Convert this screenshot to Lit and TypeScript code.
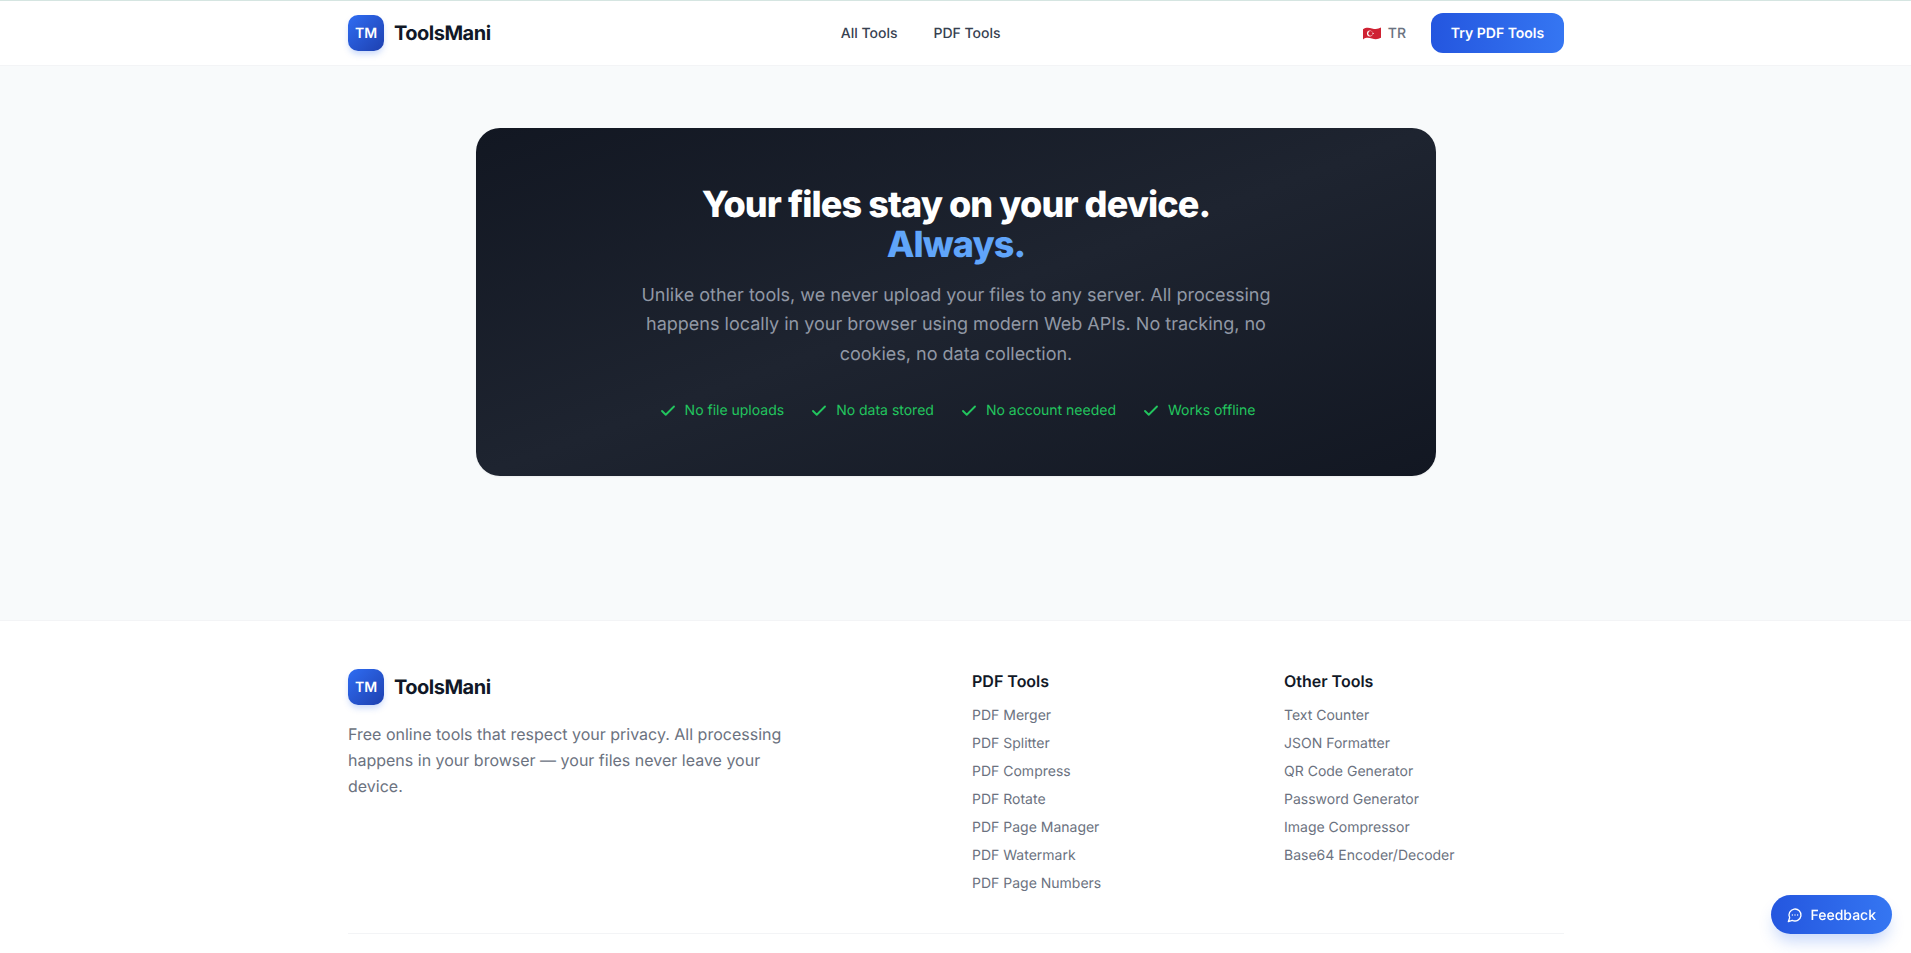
import { LitElement, html, css } from 'lit';
import { customElement } from 'lit/decorators.js';

const pdfTools = ['PDF Merger', 'PDF Splitter', 'PDF Compress', 'PDF Rotate', 'PDF Page Manager', 'PDF Watermark', 'PDF Page Numbers'];
const otherTools = ['Text Counter', 'JSON Formatter', 'QR Code Generator', 'Password Generator', 'Image Compressor', 'Base64 Encoder/Decoder'];
const promises = ['No file uploads', 'No data stored', 'No account needed', 'Works offline'];

@customElement('app-root')
export class AppRoot extends LitElement {
  static styles = css`
    :host {
      display: block;
      font-family: Inter, 'Liberation Sans', sans-serif;
      color: #111827;
      background: #fff;
      text-rendering: geometricPrecision;
    }
    a {
      color: inherit;
      text-decoration: none;
    }
    .wrap {
      width: 1216px;
      margin-left: 348px;
    }
    .header {
      border-top: 1px solid #d5e5e1;
      border-bottom: 1px solid #f3f4f6;
      background: #fff;
    }
    .header .wrap {
      height: 64px;
      display: flex;
      align-items: center;
      justify-content: space-between;
    }
    .brand {
      display: flex;
      align-items: center;
      gap: 10px;
    }
    .logo {
      width: 36px;
      height: 36px;
      border-radius: 10px;
      background: linear-gradient(135deg, #2f6df3, #1e40af);
      box-shadow: 0 4px 6px -1px rgba(37, 99, 235, 0.25);
      color: #fff;
      font-size: 14px;
      font-weight: 600;
      display: flex;
      align-items: center;
      justify-content: center;
    }
    .brand-name {
      font-size: 20px;
      font-weight: 700;
      letter-spacing: -0.025em;
      color: #111827;
    }
    .nav {
      display: flex;
      gap: 36px;
      font-size: 14px;
      font-weight: 500;
      color: #374151;
    }
    .actions {
      display: flex;
      align-items: center;
      gap: 12px;
    }
    .lang {
      display: flex;
      align-items: center;
      gap: 7px;
      padding: 0 13px 0 12px;
      font-size: 14px;
      font-weight: 500;
      color: #6b7280;
    }
    .flag {
      width: 18px;
      height: 13px;
      display: block;
    }
    .cta {
      height: 40px;
      width: 133px;
      border-radius: 12px;
      background: linear-gradient(90deg, #2456df, #3576f2);
      color: #fff;
      font-size: 14px;
      font-weight: 600;
      display: flex;
      align-items: center;
      justify-content: center;
    }
    .main {
      height: 554px;
      padding-top: 62px;
      box-sizing: border-box;
      background: #f8fafb;
    }
    .hero {
      width: 960px;
      margin-left: 476px;
      padding: 56px 0;
      border-radius: 24px;
      background: linear-gradient(to bottom right, #121722, #1e2430 50%, #121722);
      box-shadow: 0 1px 2px rgba(0, 0, 0, 0.05);
      text-align: center;
    }
    .hero h2 {
      margin: 0;
      font-size: 36px;
      line-height: 40px;
      font-weight: 800;
      letter-spacing: -0.025em;
      color: #fff;
    }
    .hero h2 span {
      display: block;
      color: #60a5fa;
    }
    .hero p {
      width: 640px;
      margin: 17px auto 32px;
      font-size: 18px;
      line-height: 29.25px;
      color: #9198a5;
    }
    .promises {
      display: flex;
      justify-content: center;
      gap: 26px;
      margin-bottom: -1px;
      padding-left: 2px;
      font-size: 14px;
      line-height: 20px;
      color: #22c55e;
    }
    .promise {
      display: flex;
      align-items: center;
      gap: 8px;
    }
    .promise svg {
      width: 18px;
      height: 18px;
    }
    .footer {
      border-top: 1px solid #f3f4f6;
      padding: 48px 0 19px;
      background: #fff;
    }
    .columns {
      display: grid;
      grid-template-columns: 592px 280px 280px;
      gap: 32px;
      padding-bottom: 39px;
      border-bottom: 1px solid #f3f4f6;
    }
    .about p {
      width: 470px;
      margin: 16px 0 0;
      font-size: 16px;
      line-height: 26px;
      color: #6b7280;
    }
    .col h3 {
      margin: 0 0 13px;
      font-size: 16px;
      line-height: 24px;
      font-weight: 600;
      color: #111827;
    }
    .col ul {
      list-style: none;
      margin: 0;
      padding: 0;
      display: flex;
      flex-direction: column;
      gap: 8px;
      font-size: 14px;
      line-height: 20px;
      color: #6b7280;
    }
    .feedback {
      position: fixed;
      right: 19px;
      bottom: 19px;
      height: 39px;
      padding: 1px 16px 0;
      box-sizing: border-box;
      border-radius: 20px;
      background: linear-gradient(90deg, #2456df, #3576f2);
      box-shadow: 0 10px 15px -3px rgba(37, 99, 235, 0.25);
      color: #fff;
      font-size: 14px;
      font-weight: 500;
      display: flex;
      align-items: center;
      gap: 8px;
    }
    .feedback svg {
      width: 16px;
      height: 16px;
    }
  `;

  private brand() {
    return html`
      <a class="brand" href="#">
        <span class="logo">TM</span>
        <span class="brand-name">ToolsMani</span>
      </a>
    `;
  }

  private links(title: string, items: string[]) {
    return html`
      <div class="col">
        <h3>${title}</h3>
        <ul>
          ${items.map((item) => html`<li><a href="#">${item}</a></li>`)}
        </ul>
      </div>
    `;
  }

  render() {
    return html`
      <header class="header">
        <div class="wrap">
          ${this.brand()}
          <nav class="nav">
            <a href="#">All Tools</a>
            <a href="#">PDF Tools</a>
          </nav>
          <div class="actions">
            <a class="lang" href="#">
              <svg class="flag" viewBox="0 0 19 13" preserveAspectRatio="none">
                <path d="M0 2.2C3 .2 6 .4 9.500 1.400S16 2.200 19 .6V10.800C16 12.400 13 12.600 9.500 11.600S3 10.400 0 12.400Z" fill="#cf2233" />
                <circle cx="7.200" cy="6.400" r="3" fill="#fff" />
                <circle cx="8" cy="6.400" r="2.400" fill="#cf2233" />
                <path d="M9.500 6.400l2-.7-1.200 1.700V5.400l1.200 1.700Z" fill="#fff" />
              </svg>
              TR
            </a>
            <a class="cta" href="#">Try PDF Tools</a>
          </div>
        </div>
      </header>

      <main class="main">
        <section class="hero">
          <h2>Your files stay on your device. <span>Always.</span></h2>
          <p>
            Unlike other tools, we never upload your files to any server. All processing happens locally in your
            browser using modern Web APIs. No tracking, no cookies, no data collection.
          </p>
          <div class="promises">
            ${promises.map(
              (text) => html`
                <span class="promise">
                  <svg viewBox="0 0 24 24" fill="none" stroke="currentColor" stroke-width="2.5" stroke-linecap="round" stroke-linejoin="round">
                    <path d="M20 6 9 17l-5-5" />
                  </svg>
                  ${text}
                </span>
              `
            )}
          </div>
        </section>
      </main>

      <footer class="footer">
        <div class="wrap columns">
          <div class="about">
            ${this.brand()}
            <p>Free online tools that respect your privacy. All processing happens in your browser — your files never leave your device.</p>
          </div>
          ${this.links('PDF Tools', pdfTools)}
          ${this.links('Other Tools', otherTools)}
        </div>
      </footer>

      <a class="feedback" href="#">
        <svg viewBox="0 0 24 24" fill="none" stroke="currentColor" stroke-width="2" stroke-linecap="round" stroke-linejoin="round">
          <path d="M7.900 20A9 9 0 1 0 4 16.100L2 22Z" />
          <path d="M8 12h.01M12 12h.01M16 12h.01" />
        </svg>
        Feedback
      </a>
    `;
  }
}
